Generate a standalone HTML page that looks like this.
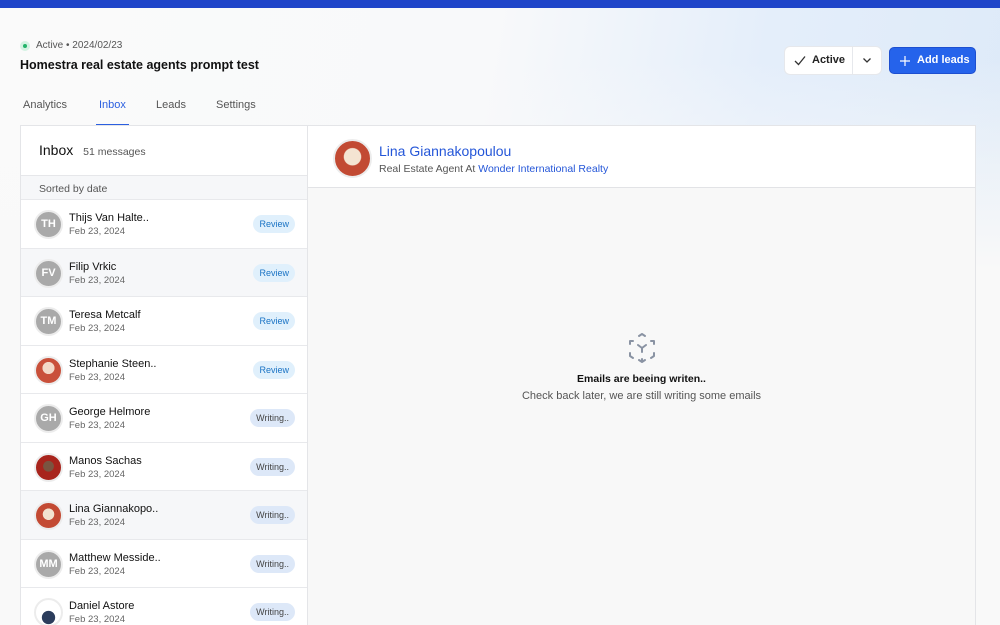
<!DOCTYPE html>
<html><head><style>
*{box-sizing:border-box;margin:0;padding:0}
html{background:#f9f9f9}
body{width:1000px;height:625px;overflow:hidden;font-family:"Liberation Sans",sans-serif;position:relative;color:#111;background:#f9f9f9}
.bg{position:absolute;left:0;top:0;width:1000px;height:625px;background:linear-gradient(180deg,rgba(249,249,249,0) 0px,rgba(249,249,249,0) 60px,#f9f9f9 270px),linear-gradient(100deg,#fafafa 0%,#f8f9fa 45%,#e4eefa 70%,#dce9f8 100%)}
.topbar{position:absolute;left:0;top:0;width:1000px;height:8px;background:#1f45c9}
.status{position:absolute;left:20px;top:40px;font-size:10px;color:#555;display:flex;align-items:center}
.dot{width:10px;height:10px;border-radius:50%;background:#d3f2e2;display:inline-block;margin-right:6px;position:relative}
.dot:after{content:"";position:absolute;left:3px;top:3px;width:4px;height:4px;border-radius:50%;background:#22b46a}
h1{position:absolute;left:20px;top:58px;font-size:12.5px;font-weight:bold;color:#111}
.tabs{position:absolute;left:23px;top:99px;font-size:11px;color:#555}
.tabs span{position:absolute;white-space:nowrap}
.uline{position:absolute;left:96px;top:124px;width:33px;height:2px;background:#2b5fe0}
.btnA{position:absolute;left:785px;top:47px;width:96px;height:27px;background:#fff;border-radius:5px;box-shadow:0 0 0 1px #e6e8ec;font-size:11px;font-weight:bold;color:#222}
.btnB{position:absolute;left:889px;top:47px;width:87px;height:27px;background:#2563eb;border-radius:5px;color:#fff;font-size:11px;font-weight:bold;border:1px solid #1d4fd0}
.left{position:absolute;left:20px;top:125px;width:288px;height:500px;background:#fff;border:1px solid #e4e5e8;border-bottom:0;overflow:hidden}
.right{position:absolute;left:307px;top:125px;width:669px;height:500px;background:#f8f8f8;border:1px solid #e4e5e8;border-bottom:0}
.rh{height:62px;background:#fff;border-bottom:1px solid #e2e3e6;position:relative}
.row{position:absolute;left:0;width:286px;height:49px;border-top:1px solid #e8e9ec;background:#fff}
.row.g{background:#f6f7f9}
.av{position:absolute;left:13px;top:10px;width:29px;height:29px;border-radius:50%;background:#a9a9a9;border:2px solid #ececec;color:#fff;font-weight:bold;font-size:11px;text-align:center;line-height:25px}
.nm{position:absolute;left:48px;top:12px;font-size:11px;color:#111}
.dt{position:absolute;left:48px;top:26px;font-size:9.5px;color:#666}
.bd{position:absolute;right:12px;top:15px;height:18px;border-radius:9px;font-size:9px;line-height:18px;padding:0 6px}
.rv{background:#e0f0fc;color:#1a73c4}
.wr{background:#dde8f8;color:#444}
</style></head><body>
<div class="bg"></div>
<div class="topbar"></div>
<div class="status"><span class="dot"></span>Active • 2024/02/23</div>
<h1>Homestra real estate agents prompt test</h1>
<div class="tabs"><span style="left:0">Analytics</span><span style="left:76px;color:#2b5fe0">Inbox</span><span style="left:133px">Leads</span><span style="left:193px">Settings</span></div>
<div class="uline"></div>
<div class="btnA"><svg style="position:absolute;left:9px;top:8px" width="12" height="11" viewBox="0 0 12 11"><path d="M1 6l3.5 3.5L11 1.5" fill="none" stroke="#333" stroke-width="1.3"/></svg><span style="position:absolute;left:27px;top:7px">Active</span><div style="position:absolute;left:67px;top:0;width:1px;height:27px;background:#e6e8ec"></div><svg style="position:absolute;left:77px;top:10px" width="10" height="7" viewBox="0 0 10 7"><path d="M1.5 1.5l3.5 3.5 3.5-3.5" fill="none" stroke="#333" stroke-width="1.3"/></svg></div>
<div class="btnB"><svg style="position:absolute;left:10px;top:8px" width="10" height="10"><path d="M5 0v10M0 5h10" stroke="#fff" stroke-width="1.2"/></svg><span style="position:absolute;left:27px;top:6px">Add leads</span></div>
<div class="left">
<div style="position:absolute;left:18px;top:16px;font-size:14px;color:#111">Inbox <span style="font-size:10.5px;color:#555;margin-left:6px">51 messages</span></div>
<div style="position:absolute;left:0;top:49px;width:286px;height:25px;background:#f6f7f9;border-top:1px solid #e6e7ea;font-size:10.5px;color:#555;padding:7px 18px">Sorted by date</div>
<div class="row" style="top:73px"><div class="av">TH</div><div class="nm">Thijs Van Halte..</div><div class="dt">Feb 23, 2024</div><div class="bd rv">Review</div></div>
<div class="row g" style="top:122px"><div class="av">FV</div><div class="nm">Filip Vrkic</div><div class="dt">Feb 23, 2024</div><div class="bd rv">Review</div></div>
<div class="row" style="top:170px"><div class="av">TM</div><div class="nm">Teresa Metcalf</div><div class="dt">Feb 23, 2024</div><div class="bd rv">Review</div></div>
<div class="row" style="top:219px"><div class="av" style="background:radial-gradient(circle at 50% 40%,#f3d9c8 30%,#c9503a 32%)"></div><div class="nm">Stephanie Steen..</div><div class="dt">Feb 23, 2024</div><div class="bd rv">Review</div></div>
<div class="row" style="top:267px"><div class="av">GH</div><div class="nm">George Helmore</div><div class="dt">Feb 23, 2024</div><div class="bd wr">Writing..</div></div>
<div class="row" style="top:316px"><div class="av" style="background:radial-gradient(circle at 50% 45%,#7a5440 28%,#a8241c 30%)"></div><div class="nm">Manos Sachas</div><div class="dt">Feb 23, 2024</div><div class="bd wr">Writing..</div></div>
<div class="row g" style="top:364px"><div class="av" style="background:radial-gradient(circle at 50% 45%,#f2e3cf 30%,#c34a33 32%)"></div><div class="nm">Lina Giannakopo..</div><div class="dt">Feb 23, 2024</div><div class="bd wr">Writing..</div></div>
<div class="row" style="top:413px"><div class="av">MM</div><div class="nm">Matthew Messide..</div><div class="dt">Feb 23, 2024</div><div class="bd wr">Writing..</div></div>
<div class="row" style="top:461px"><div class="av" style="background:radial-gradient(circle at 50% 70%,#2c3d5c 30%,#fff 32%)"></div><div class="nm">Daniel Astore</div><div class="dt">Feb 23, 2024</div><div class="bd wr">Writing..</div></div>
</div>
<div class="right">
<div class="rh"><div style="position:absolute;left:25px;top:13px;width:39px;height:39px;border-radius:50%;border:2px solid #ececec;background:radial-gradient(circle at 50% 45%,#f4e4d2 32%,#c24a33 35%)"></div>
<div style="position:absolute;left:71px;top:17px;font-size:14px;color:#2456d8">Lina Giannakopoulou</div>
<div style="position:absolute;left:71px;top:37px;font-size:10.5px;color:#555">Real Estate Agent At <span style="color:#2456d8">Wonder International Realty</span></div></div>
<svg style="position:absolute;left:318px;top:206px" width="32" height="32" viewBox="0 0 32 32" fill="none" stroke="#8a93a3" stroke-width="2" stroke-linecap="round" stroke-linejoin="round"><path d="M13 4l3-2 3 2M4 9l0 3M4 9l3 0M28 9l0 3M28 9l-3 0M4 21v3l3 2M28 21v3l-3 2M13 28l3 2 3-2M16 30v-3M12 13l4 3 4-3M16 16v4"/></svg>
<div style="position:absolute;left:0;width:667px;top:247px;text-align:center;font-size:10.5px;font-weight:bold;color:#111">Emails are beeing writen..</div>
<div style="position:absolute;left:0;width:667px;top:264px;text-align:center;font-size:11px;color:#555">Check back later, we are still writing some emails</div>
</div>
</body></html>
